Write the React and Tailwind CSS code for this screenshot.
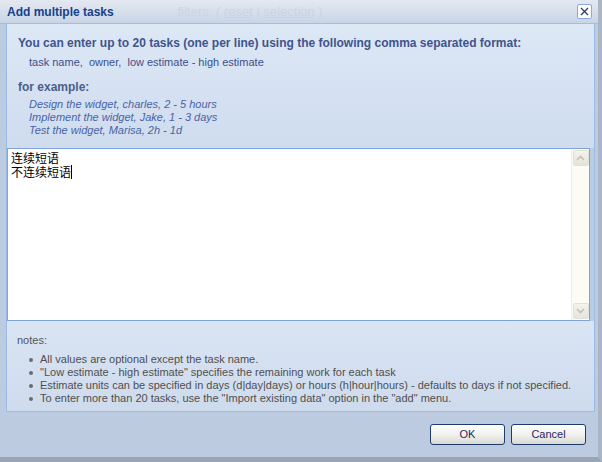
import React from 'react';

const notes = [
  'All values are optional except the task name.',
  '"Low estimate - high estimate" specifies the remaining work for each task',
  'Estimate units can be specified in days (d|day|days) or hours (h|hour|hours) - defaults to days if not specified.',
  'To enter more than 20 tasks, use the "Import existing data" option in the "add" menu.',
];

const examples = [
  'Design the widget, charles, 2 - 5 hours',
  'Implement the widget, Jake, 1 - 3 days',
  'Test the widget, Marisa, 2h - 1d',
];

const ScrollButton = ({ up }) => (
  <div className="w-[16px] h-[16px] bg-gradient-to-b from-[#f4f3ec] to-[#e6e4d8] border border-[#e2e0d4] rounded-[2px] flex items-center justify-center">
    <svg width="9" height="6" viewBox="0 0 9 6">
      <path
        d={up ? 'M1 5 L4.5 1.5 L8 5' : 'M1 1 L4.5 4.5 L8 1'}
        fill="none"
        stroke="#c3c2b8"
        strokeWidth="1.6"
      />
    </svg>
  </div>
);

const Button = ({ children }) => (
  <button className="w-[75px] h-[21px] rounded-[3px] border border-[#1c3d6b] bg-gradient-to-b from-[#ffffff] via-[#f1f1ee] to-[#d9d9d4] text-[11px] text-[#2b2660] leading-none">
    {children}
  </button>
);

export default function App() {
  return (
    <div
      className="w-[602px] h-[462px] bg-[#bccbe0] flex flex-col overflow-hidden border-r-[4px] border-r-[#aab6c6] border-b-[5px] border-b-[#9aa6b6]"
      style={{ fontFamily: '"Liberation Sans", Arial, "Noto Sans CJK SC", sans-serif' }}
    >
      {/* Header */}
      <div className="h-[24px] shrink-0 bg-gradient-to-b from-[#e4e9f1] to-[#c8d5e7] border-b border-[#a6bcdd] flex items-center pl-[7px] pr-[6px]">
        <span className="text-[12px] font-bold text-[#15428b]">Add multiple tasks</span>
        <span className="ml-[64px] text-[13px] text-[#cdd4df]">
          filters: ( <span className="underline">reset</span> | <span className="underline">selection</span> )
        </span>
        <div className="ml-auto w-[15px] h-[15px] bg-white border border-[#8ca8d6] rounded-[2px] flex items-center justify-center">
          <svg width="9" height="9" viewBox="0 0 9 9">
            <path d="M1 1 L8 8 M8 1 L1 8" stroke="#2a3f7a" strokeWidth="1.4" />
          </svg>
        </div>
      </div>

      {/* Body */}
      <div className="flex-1 flex flex-col pl-[6px] pr-[3px]">
        <div className="h-[388px] flex flex-col border border-[#99bbe8] border-t-0">
          {/* Instructions */}
          <div className="h-[124px] bg-gradient-to-b from-[#dde8f6] to-[#cfdcee] pl-[11px] pt-[12px]">
            <div className="text-[12px] font-bold text-[#3f548c] leading-[14px]">
              You can enter up to 20 tasks (one per line) using the following comma separated format:
            </div>
            <div className="pl-[11px] mt-[5px] text-[11px] text-[#3d4f8c] leading-[14px] whitespace-pre">
              {'task name,  owner,  low estimate - high estimate'}
            </div>
            <div className="mt-[11px] text-[12px] font-bold text-[#4b5e8e] leading-[14px]">for example:</div>
            <div className="pl-[11px] mt-[4px] text-[11px] italic text-[#4863a6] leading-[13px]">
              {examples.map((e) => (
                <div key={e}>{e}</div>
              ))}
            </div>
          </div>

          {/* Textarea */}
          <div className="h-[173px] bg-white border border-[#7ea3d6] mr-[4px] flex">
            <div className="flex-1 pl-[3px] pt-[2px] text-[12px] leading-[14px] text-black" style={{ fontFamily: '"Noto Sans CJK SC", sans-serif' }}>
              <div>连续短语</div>
              <div className="flex items-center">
                不连续短语
                <span className="inline-block w-[1px] h-[14px] bg-black" />
              </div>
            </div>
            <div className="w-[18px] bg-[#fcfcf5] border-l border-[#f0efe6] flex flex-col justify-between items-center py-[1px]">
              <ScrollButton up />
              <ScrollButton />
            </div>
          </div>

          {/* Notes */}
          <div className="flex-1 bg-gradient-to-b from-[#dae5f4] to-[#cedbed] pl-[10px] pt-[13px]">
            <div className="text-[11px] text-[#555] leading-[13px]">notes:</div>
            <div className="mt-[6px] pl-[12px]">
              {notes.map((n) => (
                <div key={n} className="flex items-center text-[11px] text-[#4f4f4f] leading-[13px]">
                  <span className="w-[4px] h-[4px] rounded-full bg-[#6b6b6b] mr-[7px] shrink-0" />
                  <span className="whitespace-nowrap">{n}</span>
                </div>
              ))}
            </div>
          </div>
        </div>

        {/* Footer */}
        <div className="flex justify-end gap-[6px] pt-[12px] pr-[9px]">
          <Button>OK</Button>
          <Button>Cancel</Button>
        </div>
      </div>
    </div>
  );
}
